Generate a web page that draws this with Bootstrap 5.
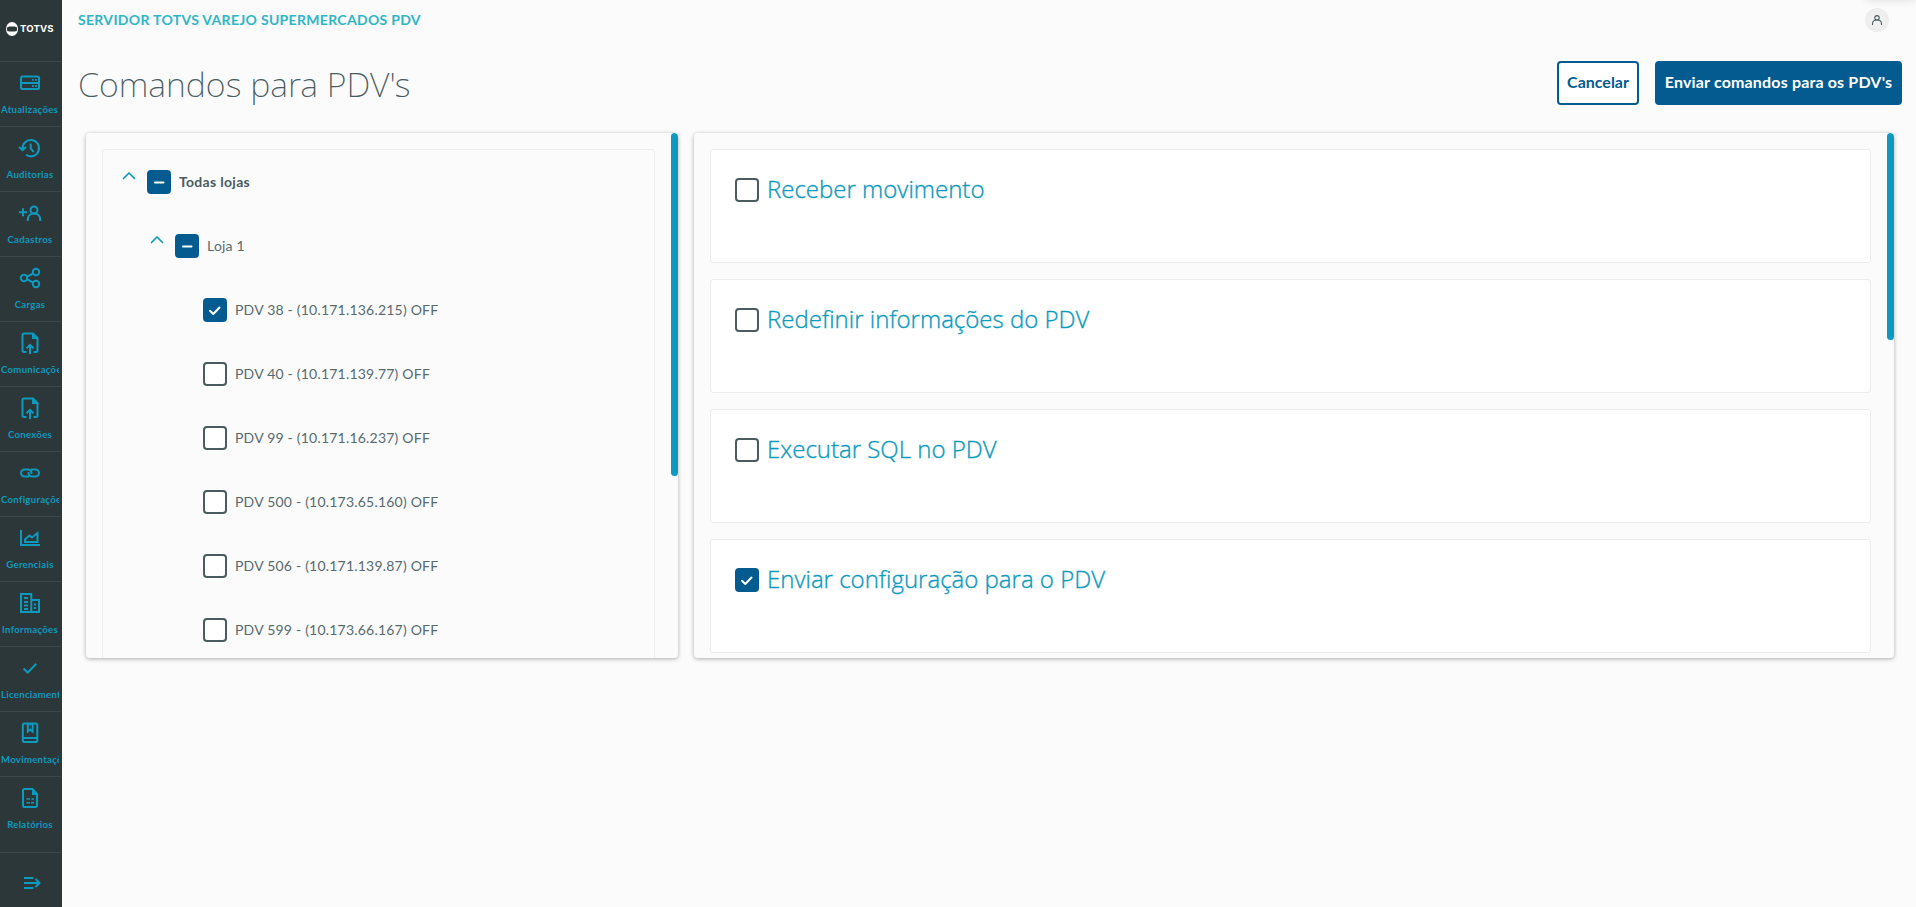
<!DOCTYPE html>
<html lang="pt-BR">
<head>
<meta charset="utf-8">
<meta name="viewport" content="width=device-width, initial-scale=1">
<title>Comandos para PDV's</title>
<link href="https://cdn.jsdelivr.net/npm/bootstrap@5.3.0/dist/css/bootstrap.min.css" rel="stylesheet">
<style>
:root{--ocean:#0c9abe;--navy:#045b8f;--ink:#4a5c60}
body{background:#fbfbfb;color:var(--ink);font-family:Lato,"Liberation Sans",sans-serif;font-size:14px;overflow:hidden}
svg{display:block;flex:none}
.side-menu{width:62px;background:#2c3739;color:var(--ocean)}
.brand-box{height:61px;padding:22px 0 0 6px}
.brand-box span{font:700 9.6px/14px Inter,sans-serif;letter-spacing:.1px;color:#fff;margin-left:2px}
.menu-entry{height:65px;width:61px;border-top:1px solid #3c494b;padding:9px 2px 0 1px;color:inherit;text-decoration:none}
.menu-entry svg,.menu-toggle svg{width:24px;height:24px;fill:none;stroke:currentColor;stroke-width:2}
.menu-entry span{font-weight:700;font-size:9.6px;letter-spacing:.28px;line-height:14px;margin-top:8px;width:58px;overflow:hidden;white-space:nowrap;text-align:center}
.menu-entry span.clip{text-align:left}
.menu-toggle{height:55px;width:61px;border-top:1px solid #3c494b;padding:18px 0 0 20px}
.top-line{height:40px;padding:0 27px 0 16px}
.product{color:#2fb5c5;font-weight:700;font-size:14px;letter-spacing:.31px;padding-bottom:1px}
.avatar{width:24px;height:24px;background:radial-gradient(#f3f3f3,#ebebeb)}
.corner{width:50px;height:6px;top:-6px;right:0;box-shadow:0 0 8px rgba(0,0,0,.14)}
.page-title{font:200 34px/46px "Noto Sans",sans-serif;letter-spacing:0;white-space:nowrap}
.page-head{padding:21px 14px 0 16px;height:93px}
.btn-po{height:44px;border:2px solid var(--navy);border-radius:4px;font-weight:700;font-size:16px;padding:0 0 2px;color:var(--navy);white-space:nowrap}
.btn-po.main{background:var(--navy);color:#fff;width:247px;letter-spacing:.16px}
.btn-po.alt{width:82px;background:#fff}
.panels{padding:0 22px 0 24px;gap:16px}
.panel{height:525px;border-radius:4px;box-shadow:0 1px 4px rgba(0,0,0,.32);padding:16px 23px 0 16px;overflow:hidden}
.panel-tree{width:592px}
.thumb{width:7px;border-radius:4px;background:var(--ocean);top:0;right:0}
.thumb.a{height:343px}.thumb.b{height:207px}
.tree{border:1px solid #ececec;border-radius:3px;height:700px;padding:0 0 0 16px}
.tree-row{height:64px}
.lvl1{margin-left:28px}.lvl2{margin-left:84px}
.toggle{width:28px;padding:0 0 13px 3px}
.tick{width:24px;height:24px;border:2px solid var(--ink);border-radius:4px;background:#fff;flex:none}
.tick.on{background:var(--navy);border-color:var(--navy)}
.tick-text{margin-left:8px;padding-bottom:2px;letter-spacing:.21px;white-space:nowrap}
span.tick-text{color:#576a6e}
strong.tick-text{letter-spacing:.3px}
.cmd{height:114px;border:1px solid #ececec;border-radius:3px;background:#fff;padding:28px 24px;margin-bottom:16px}
.cmd-name{color:var(--ocean);font:300 24px/24px "Open Sans",sans-serif;-webkit-text-stroke:.35px var(--ocean);margin:-1px 0 0 8px}
</style>
</head>
<body>
<svg class="d-none">
<symbol id="check" viewBox="0 0 20 20"><path d="M5 10.800l3.300 3.200 6.200-6.500" fill="none" stroke="#fff" stroke-width="2" stroke-linecap="round" stroke-linejoin="round"/></symbol>
<symbol id="minus" viewBox="0 0 20 20"><path d="M6 10.500h8.500" stroke="#fff" stroke-width="2" stroke-linecap="round"/></symbol>
<symbol id="up" viewBox="0 0 14 10"><path d="M1.500 7.500L7 2l5.500 5.500" fill="none" stroke="#0c9abe" stroke-width="1.700" stroke-linecap="round" stroke-linejoin="round"/></symbol>
<symbol id="upload" viewBox="0 0 24 24"><path d="M8.500 21H6a1.500 1.500 0 0 1-1.500-1.500V4A1.500 1.500 0 0 1 6 2.500h9L19.500 7v12.500A1.500 1.500 0 0 1 18 21h-2.500M12 23v-9M8.500 17.300L12 13.800l3.500 3.500"/><path d="M14 2.500h1.200l4.300 4.300V8H14z" fill="currentColor" stroke="none"/></symbol>
</svg>
<div class="d-flex vh-100">
<nav class="side-menu d-flex flex-column flex-shrink-0">
  <div class="brand-box d-flex align-items-start">
    <svg width="12" height="14" viewBox="0 0 12 14"><ellipse cx="6" cy="7" rx="6" ry="7" fill="#fff"/><path d="M1 6.200c0-1.300.8-1.800 5-1.800s5 .5 5 1.800v1.600c0 1.300-.8 1.800-5 1.800s-5-.5-5-1.800z" fill="#2c3739"/></svg>
    <span>TOTVS</span>
  </div>
  <a class="menu-entry d-flex flex-column align-items-center"><svg viewBox="0 0 24 24"><rect x="3" y="5.500" width="18" height="12.500" rx="1.500"/><path d="M3 12h18"/><path d="M14 8.800h1.800M17 8.800h1.800M14 15h1.800M17 15h1.800" stroke-width="1.800"/></svg><span class="clip">Atualizações</span></a>
  <a class="menu-entry d-flex flex-column align-items-center"><svg viewBox="0 0 24 24"><path d="M4.700 13.500A8.200 8.200 0 1 1 8 18.800M1 11l3.600 3.200L8 11M12.700 7.500v5l3 3.500"/></svg><span>Auditorias</span></a>
  <a class="menu-entry d-flex flex-column align-items-center"><svg viewBox="0 0 24 24"><path d="M1 11.300h8M5 7.300v8"/><circle cx="16" cy="9" r="3.500"/><path d="M9.800 20v-1.500c0-3.500 2.500-6 6.200-6s6.200 2.500 6.200 6V20"/></svg><span>Cadastros</span></a>
  <a class="menu-entry d-flex flex-column align-items-center"><svg viewBox="0 0 24 24"><circle cx="6" cy="12" r="3.200"/><circle cx="18" cy="6" r="3.200"/><circle cx="18" cy="18" r="3.200"/><path d="M9 10.600l6.200-3.100M9 13.400l6.200 3.100"/></svg><span>Cargas</span></a>
  <a class="menu-entry d-flex flex-column align-items-center"><svg><use href="#upload"/></svg><span class="clip">Comunicações</span></a>
  <a class="menu-entry d-flex flex-column align-items-center"><svg><use href="#upload"/></svg><span>Conexões</span></a>
  <a class="menu-entry d-flex flex-column align-items-center"><svg viewBox="0 0 24 24"><path d="M11 15.500H6.500a3.500 3.500 0 0 1 0-7H10a3.500 3.500 0 0 1 3.500 3.500v1M13 8.500h4.500a3.500 3.500 0 0 1 0 7H14a3.500 3.500 0 0 1-3.500-3.500v-1"/></svg><span class="clip">Configurações</span></a>
  <a class="menu-entry d-flex flex-column align-items-center"><svg viewBox="0 0 24 24"><path d="M3 4v15h19M7 16v-2.500l4.500-4 2.500 2 5.500-4.500v9z"/></svg><span>Gerenciais</span></a>
  <a class="menu-entry d-flex flex-column align-items-center"><svg viewBox="0 0 24 24"><path d="M13.300 21H3V3h10.300zM13.300 9H21v12h-8M6 7h4M6 11h4M6 14.500h4M6 18h4"/><path d="M16 13.500h2M16 17h2"/></svg><span>Informações</span></a>
  <a class="menu-entry d-flex flex-column align-items-center"><svg viewBox="0 0 24 24"><path d="M5.500 12.500l4.300 4 8.500-8.700" stroke-width="2"/></svg><span class="clip">Licenciamento</span></a>
  <a class="menu-entry d-flex flex-column align-items-center"><svg viewBox="0 0 24 24"><rect x="4.800" y="2.500" width="14.500" height="18.500" rx="1.800"/><path d="M5 17h14.500M9.800 2.500v8l2.400-2 2.400 2v-8M12.200 2.500v2"/></svg><span class="clip">Movimentações</span></a>
  <a class="menu-entry d-flex flex-column align-items-center"><svg viewBox="0 0 24 24"><path d="M14.500 3H6.500A1.500 1.500 0 0 0 5 4.500v15A1.500 1.500 0 0 0 6.500 21h11a1.500 1.500 0 0 0 1.500-1.500V8z"/><path d="M8.500 13H12M13.500 13h2.500M8.500 16.700h3.500M13 16.700h3" stroke-width="1.600"/><path d="M14 3l5 5v1h-5z" fill="currentColor" stroke="none"/></svg><span>Relatórios</span></a>
  <div class="menu-toggle mt-auto"><svg viewBox="0 0 24 24"><path d="M4 7h9.500M4 12h15M4 17h9.500M15.500 8l4 4-4 4"/></svg></div>
</nav>
<main class="flex-grow-1 position-relative">
  <div class="corner position-absolute"></div>
  <header class="top-line d-flex align-items-center justify-content-between">
    <span class="product">SERVIDOR TOTVS VAREJO SUPERMERCADOS PDV</span>
    <div class="avatar rounded-circle d-flex align-items-center justify-content-center"><svg width="12" height="12" viewBox="0 0 12 12" fill="none" stroke="#4a5c60" stroke-width="1.100"><circle cx="6" cy="3.800" r="2.200"/><path d="M1.500 11V9.800C1.500 7.500 3.300 6 6 6s4.500 1.500 4.500 3.800V11"/></svg></div>
  </header>
  <div class="page-head d-flex justify-content-between align-items-start">
    <h1 class="page-title m-0">Comandos para PDV's</h1>
    <div class="d-flex gap-3"><button class="btn btn-po alt">Cancelar</button><button class="btn btn-po main">Enviar comandos para os PDV's</button></div>
  </div>
  <div class="panels d-flex">
    <section class="panel panel-tree position-relative flex-shrink-0">
      <div class="tree">
        <div class="tree-row d-flex align-items-center"><span class="toggle"><svg width="14" height="10"><use href="#up"/></svg></span><span class="tick on"><svg width="20" height="20"><use href="#minus"/></svg></span><strong class="tick-text">Todas lojas</strong></div>
        <div class="tree-row d-flex align-items-center lvl1"><span class="toggle"><svg width="14" height="10"><use href="#up"/></svg></span><span class="tick on"><svg width="20" height="20"><use href="#minus"/></svg></span><span class="tick-text">Loja 1</span></div>
        <div class="tree-row d-flex align-items-center lvl2"><span class="tick on"><svg width="20" height="20"><use href="#check"/></svg></span><span class="tick-text">PDV 38 - (10.171.136.215) OFF</span></div>
        <div class="tree-row d-flex align-items-center lvl2"><span class="tick"></span><span class="tick-text">PDV 40 - (10.171.139.77) OFF</span></div>
        <div class="tree-row d-flex align-items-center lvl2"><span class="tick"></span><span class="tick-text">PDV 99 - (10.171.16.237) OFF</span></div>
        <div class="tree-row d-flex align-items-center lvl2"><span class="tick"></span><span class="tick-text">PDV 500 - (10.173.65.160) OFF</span></div>
        <div class="tree-row d-flex align-items-center lvl2"><span class="tick"></span><span class="tick-text">PDV 506 - (10.171.139.87) OFF</span></div>
        <div class="tree-row d-flex align-items-center lvl2"><span class="tick"></span><span class="tick-text">PDV 599 - (10.173.66.167) OFF</span></div>
      </div>
      <div class="thumb a position-absolute"></div>
    </section>
    <section class="panel position-relative flex-grow-1">
      <div class="cmd d-flex align-items-start"><span class="tick"></span><span class="cmd-name">Receber movimento</span></div>
      <div class="cmd d-flex align-items-start"><span class="tick"></span><span class="cmd-name">Redefinir informações do PDV</span></div>
      <div class="cmd d-flex align-items-start"><span class="tick"></span><span class="cmd-name">Executar SQL no PDV</span></div>
      <div class="cmd d-flex align-items-start"><span class="tick on"><svg width="20" height="20"><use href="#check"/></svg></span><span class="cmd-name">Enviar configuração para o PDV</span></div>
      <div class="thumb b position-absolute"></div>
    </section>
  </div>
</main>
</div>
<script src="https://cdn.jsdelivr.net/npm/bootstrap@5.3.0/dist/js/bootstrap.bundle.min.js"></script>
</body>
</html>
